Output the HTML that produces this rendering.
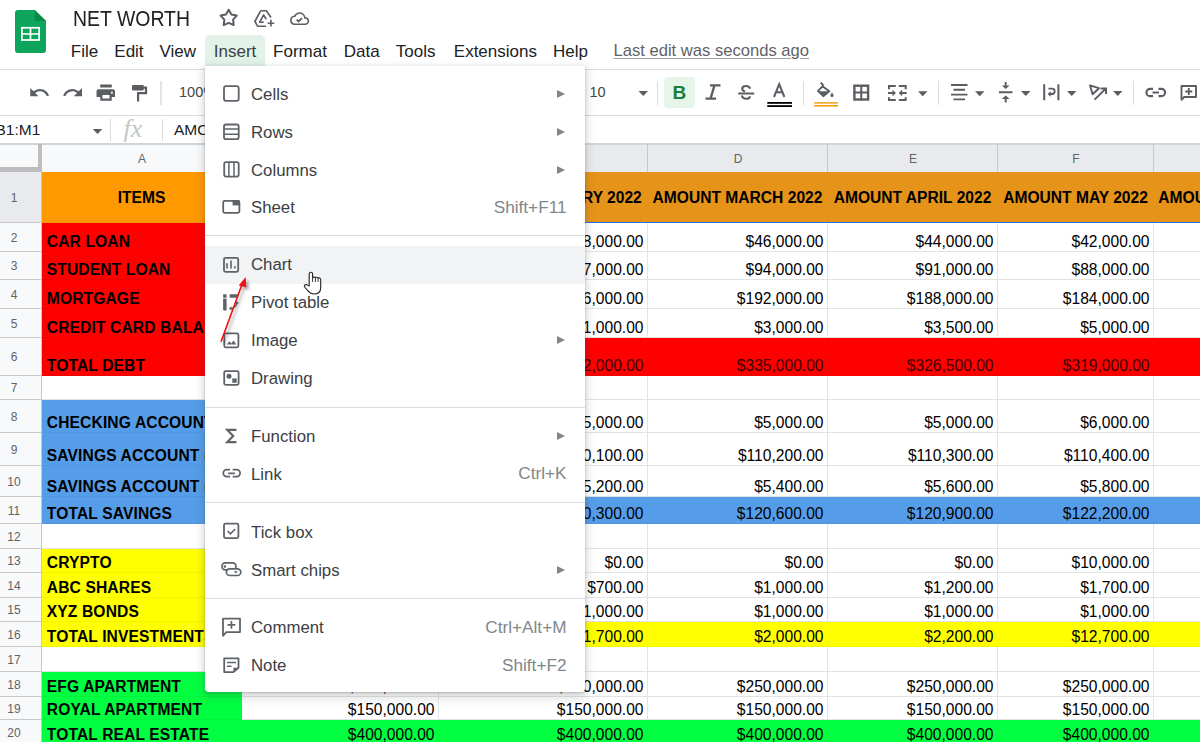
<!DOCTYPE html><html><head><meta charset="utf-8"><style>
*{margin:0;padding:0;box-sizing:border-box}
html,body{width:1200px;height:742px;overflow:hidden;background:#fff;font-family:"Liberation Sans",sans-serif}
.ab{position:absolute}
.t{position:absolute;white-space:nowrap;line-height:1}
.cell{position:absolute;white-space:nowrap;line-height:1;font-size:15.6px;color:#000;overflow:hidden}
.hd{position:absolute;font-size:12px;color:#5f6368;line-height:1;text-align:center}
.mi{position:absolute;left:251px;font-size:16.8px;color:#3c4043;line-height:1;white-space:nowrap}
.sc{position:absolute;right:633.5px;font-size:17.2px;color:#80868b;line-height:1;white-space:nowrap}
.tri{position:absolute;left:557px;width:0;height:0;border-top:4px solid transparent;border-bottom:4px solid transparent;border-left:8px solid #80868b}
.sep{position:absolute;left:205px;width:380px;height:1px;background:#dadce0}
svg.ov{position:absolute;left:0;top:0}
</style></head><body>

<svg class="ab" style="left:15px;top:10px" width="31" height="43" viewBox="0 0 32 44" preserveAspectRatio="none">
<path d="M3 0H20.4L32 11.2V41Q32 44 29 44H3Q0 44 0 41V3Q0 0 3 0Z" fill="#0da55b"/>
<path d="M20.4 0L32 11.2H20.4Z" fill="#0a8c48"/>
<rect x="6.2" y="17.3" width="19.6" height="14.3" fill="#fff"/>
<rect x="8" y="19.1" width="7.1" height="4.6" fill="#0da55b"/><rect x="16.9" y="19.1" width="7.1" height="4.6" fill="#0da55b"/>
<rect x="8" y="25.3" width="7.1" height="4.5" fill="#0da55b"/><rect x="16.9" y="25.3" width="7.1" height="4.5" fill="#0da55b"/>
</svg>
<div class="t" style="left:73px;top:8.12px;font-size:21.6px;color:#202124;transform:scaleX(0.9);transform-origin:0 0">NET WORTH</div>
<div class="ab" style="left:205px;top:35px;width:60px;height:31px;background:#e2f2e8;border-radius:5px 5px 0 0"></div>
<div class="t" style="left:70.8px;top:42.61px;font-size:17px;color:#202124">File</div>
<div class="t" style="left:114.3px;top:42.61px;font-size:17px;color:#202124">Edit</div>
<div class="t" style="left:159.55px;top:42.61px;font-size:17px;color:#202124">View</div>
<div class="t" style="left:213.8px;top:42.61px;font-size:17px;color:#3c4043">Insert</div>
<div class="t" style="left:273.05px;top:42.61px;font-size:17px;color:#202124">Format</div>
<div class="t" style="left:343.8px;top:42.61px;font-size:17px;color:#202124">Data</div>
<div class="t" style="left:395.8px;top:42.61px;font-size:17px;color:#202124">Tools</div>
<div class="t" style="left:453.8px;top:42.61px;font-size:17px;color:#202124">Extensions</div>
<div class="t" style="left:553.05px;top:42.61px;font-size:17px;color:#202124">Help</div>
<div class="t" style="left:613.5px;top:42.95px;font-size:16.6px;color:#5f6368;text-decoration:underline;text-decoration-color:#9aa0a6;text-underline-offset:1.5px">Last edit was seconds ago</div>
<div class="ab" style="left:0px;top:68.6px;width:1200px;height:1.2px;background:#dadce0;"></div>
<div class="ab" style="left:0px;top:115px;width:1200px;height:1px;background:#dadce0;"></div>
<div class="ab" style="left:0px;top:143px;width:1200px;height:2px;background:#d2d4d6;"></div>
<div class="ab" style="left:160.3px;top:81px;width:1.6px;height:24px;background:#e3e5e8;"></div>
<div class="ab" style="left:657px;top:81px;width:1px;height:24px;background:#dadce0;"></div>
<div class="ab" style="left:803px;top:81px;width:1px;height:24px;background:#dadce0;"></div>
<div class="ab" style="left:938px;top:81px;width:1px;height:24px;background:#dadce0;"></div>
<div class="ab" style="left:1133px;top:81px;width:1px;height:24px;background:#dadce0;"></div>
<div class="ab" style="left:664px;top:77px;width:31px;height:31px;background:#e6f4ea;border-radius:4px"></div>
<div class="t" style="left:589.5px;top:84.73px;font-size:14.5px;color:#444746">10</div>
<div class="t" style="left:179px;top:84.73px;font-size:14.5px;color:#444746">100%</div>
<div class="t" style="left:-4.5px;top:121.88px;font-size:15.5px;color:#202124">B1:M1</div>
<div class="t" style="left:174px;top:121.88px;font-size:15.5px;color:#202124">AMOUNT JANUARY 2022</div>
<div class="ab" style="left:110px;top:119px;width:1px;height:22px;background:#dadce0;"></div>
<div class="ab" style="left:162px;top:119px;width:1px;height:22px;background:#dadce0;"></div>
<div class="t" style="left:123.5px;top:116.49px;font-size:26px;font-family:'Liberation Serif',serif;font-style:italic;color:#c4c7c5">fx</div>
<div class="t" style="left:672.5px;top:83.12px;font-size:19px;font-weight:bold;color:#188038">B</div>
<svg class="ov" width="1200" height="742"><g transform="translate(28.4 81.6) scale(0.92)"><path d="M12.5 8c-2.65 0-5.05.99-6.9 2.6L2 7v9h9l-3.62-3.62c1.39-1.160 3.16-1.88 5.12-1.88 3.54 0 6.55 2.31 7.6 5.5l2.37-.78C21.08 11.03 17.15 8 12.5 8z" fill="#5a5e63"/></g><g transform="translate(61.76 81.6) scale(0.92)"><path d="M18.4 10.6C16.55 8.99 14.15 8 11.5 8c-4.65 0-8.58 3.03-9.96 7.22L3.9 16c1.05-3.19 4.05-5.5 7.6-5.5 1.95 0 3.73.72 5.12 1.88L13 16h9V7l-3.6 3.6z" fill="#5a5e63"/></g><rect x="100.25" y="84.5" width="11.5" height="3" fill="#5a5e63"/><path d="M98.5 89.25H113A2 2 0 0 1 115 91.25V97H111.75V100.75H100.25V97H96.5V91.25A2 2 0 0 1 98.5 89.25Z" fill="#5a5e63"/><rect x="102.5" y="95" width="7" height="3.5" fill="#fff"/><rect x="111" y="91.8" width="1.8" height="1.8" fill="#fff"/><rect x="132" y="85" width="11.75" height="5.5" rx="1" fill="#5a5e63"/><path d="M143 87.6H146V93.1H138.1V101.5" fill="none" stroke="#5a5e63" stroke-width="2.2"/><path d="M638.5 91H648.0L643.25 96Z" fill="#5a5e63"/><path d="M710 85.3H720.5M705.5 98.7H716M714.5 85.3L710.5 98.7" fill="none" stroke="#5a5e63" stroke-width="2.3"/><path d="M750.3 88.6Q749 86 746 86 742.2 86 742.2 88.8 742.2 90.6 745 91.5" fill="none" stroke="#5a5e63" stroke-width="2.1"/><path d="M738.2 93.5H754.2" fill="none" stroke="#5a5e63" stroke-width="2"/><path d="M741.8 95.5Q742.6 98.8 746 98.8 749.9 98.8 749.9 96.2" fill="none" stroke="#5a5e63" stroke-width="2.1"/><path d="M774 97L779.2 84.2 784.4 97M776 92.2H782.4" fill="none" stroke="#5a5e63" stroke-width="2"/><rect x="767.3" y="102" width="24.7" height="1.8" fill="#000"/><rect x="767.3" y="105.2" width="24.7" height="1.8" fill="#000"/><path d="M820.8 82.6L823.5 85.6" fill="none" stroke="#5a5e63" stroke-width="2"/><path d="M822.5 86.3L829.3 91.3 823.3 96.2 818 90.9Z" fill="none" stroke="#5a5e63" stroke-width="1.9" stroke-linejoin="round"/><path d="M817.6 91.2H829.6L823.3 96.4Z" fill="#5a5e63"/><path d="M832 92.5Q833.6 94.6 833.6 95.5A1.6 1.6 0 0 1 830.4 95.5Q830.4 94.6 832 92.5Z" fill="#5a5e63"/><rect x="814.2" y="102.2" width="23.8" height="1.4" fill="#f29900"/><rect x="814.2" y="105" width="23.8" height="1.5" fill="#f29900"/><rect x="854.4" y="85.7" width="13.7" height="13.8" fill="none" stroke="#5a5e63" stroke-width="2.4"/><path d="M861.25 85V100.5M853.5 92.6H869" fill="none" stroke="#5a5e63" stroke-width="2"/><path d="M889 89.3V86H895.8M898.8 86H905.7V89.3M889 97.2V100H895.8M898.8 100H905.7V97.2" fill="none" stroke="#5a5e63" stroke-width="2"/><path d="M888 93H893M906.7 93H901.5" fill="none" stroke="#5a5e63" stroke-width="1.8"/><path d="M896 93L892.5 89.8V96.2Z M898.7 93L902.2 89.8V96.2Z" fill="#5a5e63"/><path d="M918 91.2H927.5L922.75 96.2Z" fill="#5a5e63"/><path d="M951 85H967.5M953.5 89.8H965M951 94.6H967.5M953.5 99.4H965" fill="none" stroke="#5a5e63" stroke-width="1.9"/><path d="M975 91.2H984.5L979.75 96.2Z" fill="#5a5e63"/><path d="M999 92.2H1012.5M1005.7 82V86M1005.7 102.5V98.5" fill="none" stroke="#5a5e63" stroke-width="1.9"/><path d="M1001.8 85.5H1009.6L1005.7 89Z M1001.8 99H1009.6L1005.7 95.5Z" fill="#5a5e63"/><path d="M1021 91H1030.5L1025.75 96Z" fill="#5a5e63"/><path d="M1044.2 84.2V100.2M1058.4 84.2V100.2" fill="none" stroke="#5a5e63" stroke-width="2"/><path d="M1048.5 88.6H1052A2.7 2.7 0 0 1 1052 94H1050" fill="none" stroke="#5a5e63" stroke-width="1.8"/><path d="M1047.5 94L1050.7 91.3V96.7Z" fill="#5a5e63"/><path d="M1067 91H1076.5L1071.75 96Z" fill="#5a5e63"/><path d="M1090 85.3L1099 88.2 1092.6 94.3Z" fill="none" stroke="#5a5e63" stroke-width="1.9" stroke-linejoin="round"/><path d="M1094.6 99.6L1105.7 88.6M1100.5 88.5H1106V94" fill="none" stroke="#5a5e63" stroke-width="2"/><path d="M1113 91H1122.5L1117.75 96Z" fill="#5a5e63"/><path d="M1153 88.9H1150A3.6 3.6 0 0 0 1150 96.1H1153M1158.5 88.9H1161.5A3.6 3.6 0 0 1 1161.5 96.1H1158.5M1152.5 92.5H1159" fill="none" stroke="#5a5e63" stroke-width="2.1"/><path d="M1181.5 99.8V86H1196V97H1184.2Z" fill="none" stroke="#5a5e63" stroke-width="1.9" stroke-linejoin="round"/><path d="M1188.8 88V95M1185.3 91.5H1192.3" fill="none" stroke="#5a5e63" stroke-width="1.8"/><polygon points="228.70,9.70 231.40,14.48 236.78,15.57 233.07,19.62 233.70,25.08 228.70,22.80 223.70,25.08 224.33,19.62 220.62,15.57 226.00,14.48" fill="none" stroke="#5a5e63" stroke-width="2" stroke-linejoin="round"/><path d="M260.6 10.8H266.4L271 17.5M266 26.2H257.6L254.9 21.5 260.6 10.8" fill="none" stroke="#5a5e63" stroke-width="1.6" stroke-linejoin="round"/><path d="M263.8 22.2H259.7L263.6 15 266.3 19.3" fill="none" stroke="#5a5e63" stroke-width="1.6" stroke-linejoin="round"/><path d="M270.9 19.8V26.5M267.6 23.2H274.3" fill="none" stroke="#5a5e63" stroke-width="1.6"/><g transform="translate(290 9.0) scale(0.8)"><path d="M19.35 10.04C18.67 6.59 15.64 4 12 4 9.11 4 6.6 5.640 5.35 8.04 2.34 8.36 0 10.91 0 14c0 3.31 2.69 6 6 6h13c2.76 0 5-2.24 5-5 0-2.64-2.05-4.78-4.65-4.96zM19 18H6c-2.21 0-4-1.79-4-4 0-2.05 1.53-3.76 3.56-3.970l1.07-.11.5-.95C8.080 7.14 9.94 6 12 6c2.62 0 4.88 1.86 5.39 4.43l.3 1.5 1.53.11c1.56.1 2.78 1.41 2.78 2.96 0 1.65-1.35 3-3 3z" fill="#5a5e63"/></g><path d="M296.6 19.6L298.6 21.5 301.9 18.2" fill="none" stroke="#5a5e63" stroke-width="1.8"/><path d="M92.8 129H102.3L97.55 134Z" fill="#5a5e63"/></svg>
<div class="ab" style="left:0px;top:145px;width:1200px;height:27px;background:#e8eaed;"></div>
<div class="ab" style="left:0px;top:145px;width:242px;height:27px;background:#f8f9fa;"></div>
<div class="ab" style="left:0px;top:172px;width:42px;height:600px;background:#f8f9fa;"></div>
<div class="ab" style="left:0px;top:172px;width:42px;height:51px;background:#e8eaed;"></div>
<div class="ab" style="left:0px;top:222px;width:42px;height:1px;background:#c7c7c7;"></div>
<div class="ab" style="left:42px;top:222px;width:1200px;height:1px;background:#e2e3e3;"></div>
<div class="ab" style="left:0px;top:251px;width:42px;height:1px;background:#c7c7c7;"></div>
<div class="ab" style="left:42px;top:251px;width:1200px;height:1px;background:#e2e3e3;"></div>
<div class="ab" style="left:0px;top:279px;width:42px;height:1px;background:#c7c7c7;"></div>
<div class="ab" style="left:42px;top:279px;width:1200px;height:1px;background:#e2e3e3;"></div>
<div class="ab" style="left:0px;top:308px;width:42px;height:1px;background:#c7c7c7;"></div>
<div class="ab" style="left:42px;top:308px;width:1200px;height:1px;background:#e2e3e3;"></div>
<div class="ab" style="left:0px;top:337px;width:42px;height:1px;background:#c7c7c7;"></div>
<div class="ab" style="left:42px;top:337px;width:1200px;height:1px;background:#e2e3e3;"></div>
<div class="ab" style="left:0px;top:375px;width:42px;height:1px;background:#c7c7c7;"></div>
<div class="ab" style="left:42px;top:375px;width:1200px;height:1px;background:#e2e3e3;"></div>
<div class="ab" style="left:0px;top:399px;width:42px;height:1px;background:#c7c7c7;"></div>
<div class="ab" style="left:42px;top:399px;width:1200px;height:1px;background:#e2e3e3;"></div>
<div class="ab" style="left:0px;top:432px;width:42px;height:1px;background:#c7c7c7;"></div>
<div class="ab" style="left:42px;top:432px;width:1200px;height:1px;background:#e2e3e3;"></div>
<div class="ab" style="left:0px;top:465px;width:42px;height:1px;background:#c7c7c7;"></div>
<div class="ab" style="left:42px;top:465px;width:1200px;height:1px;background:#e2e3e3;"></div>
<div class="ab" style="left:0px;top:496px;width:42px;height:1px;background:#c7c7c7;"></div>
<div class="ab" style="left:42px;top:496px;width:1200px;height:1px;background:#e2e3e3;"></div>
<div class="ab" style="left:0px;top:523px;width:42px;height:1px;background:#c7c7c7;"></div>
<div class="ab" style="left:42px;top:523px;width:1200px;height:1px;background:#e2e3e3;"></div>
<div class="ab" style="left:0px;top:548px;width:42px;height:1px;background:#c7c7c7;"></div>
<div class="ab" style="left:42px;top:548px;width:1200px;height:1px;background:#e2e3e3;"></div>
<div class="ab" style="left:0px;top:572px;width:42px;height:1px;background:#c7c7c7;"></div>
<div class="ab" style="left:42px;top:572px;width:1200px;height:1px;background:#e2e3e3;"></div>
<div class="ab" style="left:0px;top:597px;width:42px;height:1px;background:#c7c7c7;"></div>
<div class="ab" style="left:42px;top:597px;width:1200px;height:1px;background:#e2e3e3;"></div>
<div class="ab" style="left:0px;top:621px;width:42px;height:1px;background:#c7c7c7;"></div>
<div class="ab" style="left:42px;top:621px;width:1200px;height:1px;background:#e2e3e3;"></div>
<div class="ab" style="left:0px;top:646px;width:42px;height:1px;background:#c7c7c7;"></div>
<div class="ab" style="left:42px;top:646px;width:1200px;height:1px;background:#e2e3e3;"></div>
<div class="ab" style="left:0px;top:671px;width:42px;height:1px;background:#c7c7c7;"></div>
<div class="ab" style="left:42px;top:671px;width:1200px;height:1px;background:#e2e3e3;"></div>
<div class="ab" style="left:0px;top:696px;width:42px;height:1px;background:#c7c7c7;"></div>
<div class="ab" style="left:42px;top:696px;width:1200px;height:1px;background:#e2e3e3;"></div>
<div class="ab" style="left:0px;top:719px;width:42px;height:1px;background:#c7c7c7;"></div>
<div class="ab" style="left:42px;top:719px;width:1200px;height:1px;background:#e2e3e3;"></div>
<div class="ab" style="left:0px;top:744px;width:42px;height:1px;background:#c7c7c7;"></div>
<div class="ab" style="left:42px;top:744px;width:1200px;height:1px;background:#e2e3e3;"></div>
<div class="ab" style="left:241px;top:144px;width:1px;height:28px;background:#c7c7c7;"></div>
<div class="ab" style="left:241px;top:172px;width:1px;height:600px;background:#e2e3e3;"></div>
<div class="ab" style="left:438px;top:144px;width:1px;height:28px;background:#c7c7c7;"></div>
<div class="ab" style="left:438px;top:172px;width:1px;height:600px;background:#e2e3e3;"></div>
<div class="ab" style="left:647px;top:144px;width:1px;height:28px;background:#c7c7c7;"></div>
<div class="ab" style="left:647px;top:172px;width:1px;height:600px;background:#e2e3e3;"></div>
<div class="ab" style="left:827px;top:144px;width:1px;height:28px;background:#c7c7c7;"></div>
<div class="ab" style="left:827px;top:172px;width:1px;height:600px;background:#e2e3e3;"></div>
<div class="ab" style="left:997px;top:144px;width:1px;height:28px;background:#c7c7c7;"></div>
<div class="ab" style="left:997px;top:172px;width:1px;height:600px;background:#e2e3e3;"></div>
<div class="ab" style="left:1153px;top:144px;width:1px;height:28px;background:#c7c7c7;"></div>
<div class="ab" style="left:1153px;top:172px;width:1px;height:600px;background:#e2e3e3;"></div>
<div class="ab" style="left:42px;top:172px;width:1200px;height:51px;background:#e69419;"></div>
<div class="ab" style="left:42px;top:172px;width:200px;height:51px;background:#ff9900;"></div>
<div class="ab" style="left:42px;top:223px;width:200px;height:29px;background:#ff0000;"></div>
<div class="ab" style="left:42px;top:252px;width:200px;height:28px;background:#ff0000;"></div>
<div class="ab" style="left:42px;top:280px;width:200px;height:29px;background:#ff0000;"></div>
<div class="ab" style="left:42px;top:309px;width:200px;height:29px;background:#ff0000;"></div>
<div class="ab" style="left:42px;top:338px;width:1200px;height:38px;background:#ff0000;"></div>
<div class="ab" style="left:42px;top:338px;width:200px;height:38px;background:#ff0000;"></div>
<div class="ab" style="left:42px;top:400px;width:200px;height:33px;background:#569de9;"></div>
<div class="ab" style="left:42px;top:433px;width:200px;height:33px;background:#569de9;"></div>
<div class="ab" style="left:42px;top:466px;width:200px;height:31px;background:#569de9;"></div>
<div class="ab" style="left:42px;top:497px;width:1200px;height:27px;background:#569de9;"></div>
<div class="ab" style="left:42px;top:497px;width:200px;height:27px;background:#569de9;"></div>
<div class="ab" style="left:42px;top:549px;width:200px;height:24px;background:#ffff00;"></div>
<div class="ab" style="left:42px;top:573px;width:200px;height:25px;background:#ffff00;"></div>
<div class="ab" style="left:42px;top:598px;width:200px;height:24px;background:#ffff00;"></div>
<div class="ab" style="left:42px;top:622px;width:1200px;height:25px;background:#ffff00;"></div>
<div class="ab" style="left:42px;top:622px;width:200px;height:25px;background:#ffff00;"></div>
<div class="ab" style="left:42px;top:672px;width:200px;height:25px;background:#00ff40;"></div>
<div class="ab" style="left:42px;top:697px;width:200px;height:23px;background:#00ff40;"></div>
<div class="ab" style="left:42px;top:720px;width:1200px;height:25px;background:#00ff40;"></div>
<div class="ab" style="left:42px;top:720px;width:200px;height:25px;background:#00ff40;"></div>
<div class="ab" style="left:42px;top:222px;width:1200px;height:1px;background:rgba(0,0,0,0.04);"></div>
<div class="ab" style="left:42px;top:251px;width:200px;height:1px;background:rgba(0,0,0,0.04);"></div>
<div class="ab" style="left:42px;top:279px;width:200px;height:1px;background:rgba(0,0,0,0.04);"></div>
<div class="ab" style="left:42px;top:308px;width:200px;height:1px;background:rgba(0,0,0,0.04);"></div>
<div class="ab" style="left:42px;top:337px;width:200px;height:1px;background:rgba(0,0,0,0.04);"></div>
<div class="ab" style="left:42px;top:375px;width:1200px;height:1px;background:rgba(0,0,0,0.04);"></div>
<div class="ab" style="left:42px;top:432px;width:200px;height:1px;background:rgba(0,0,0,0.04);"></div>
<div class="ab" style="left:42px;top:465px;width:200px;height:1px;background:rgba(0,0,0,0.04);"></div>
<div class="ab" style="left:42px;top:496px;width:200px;height:1px;background:rgba(0,0,0,0.04);"></div>
<div class="ab" style="left:42px;top:523px;width:1200px;height:1px;background:rgba(0,0,0,0.04);"></div>
<div class="ab" style="left:42px;top:572px;width:200px;height:1px;background:rgba(0,0,0,0.04);"></div>
<div class="ab" style="left:42px;top:597px;width:200px;height:1px;background:rgba(0,0,0,0.04);"></div>
<div class="ab" style="left:42px;top:621px;width:200px;height:1px;background:rgba(0,0,0,0.04);"></div>
<div class="ab" style="left:42px;top:646px;width:1200px;height:1px;background:rgba(0,0,0,0.04);"></div>
<div class="ab" style="left:42px;top:696px;width:200px;height:1px;background:rgba(0,0,0,0.04);"></div>
<div class="ab" style="left:42px;top:719px;width:200px;height:1px;background:rgba(0,0,0,0.04);"></div>
<div class="ab" style="left:42px;top:744px;width:1200px;height:1px;background:rgba(0,0,0,0.04);"></div>
<div class="ab" style="left:41px;top:144px;width:1px;height:600px;background:#c7c7c7;"></div>
<div class="ab" style="left:38px;top:144px;width:4px;height:28px;background:#bdbdbd;"></div>
<div class="ab" style="left:0px;top:167px;width:42px;height:5px;background:#bdbdbd;"></div>
<div class="ab" style="left:242px;top:222px;width:1000px;height:1.2px;background:#1a73e8;"></div>
<div class="hd" style="left:42px;top:152.5px;width:200px">A</div>
<div class="hd" style="left:242px;top:152.5px;width:197px">B</div>
<div class="hd" style="left:439px;top:152.5px;width:209px">C</div>
<div class="hd" style="left:648px;top:152.5px;width:180px">D</div>
<div class="hd" style="left:828px;top:152.5px;width:170px">E</div>
<div class="hd" style="left:998px;top:152.5px;width:156px">F</div>
<div class="hd" style="left:1154px;top:152.5px;width:163px">G</div>
<div class="hd" style="left:-6px;top:191.5px;width:40px">1</div>
<div class="hd" style="left:-6px;top:231.5px;width:40px">2</div>
<div class="hd" style="left:-6px;top:260.0px;width:40px">3</div>
<div class="hd" style="left:-6px;top:288.5px;width:40px">4</div>
<div class="hd" style="left:-6px;top:317.5px;width:40px">5</div>
<div class="hd" style="left:-6px;top:351.0px;width:40px">6</div>
<div class="hd" style="left:-6px;top:382.0px;width:40px">7</div>
<div class="hd" style="left:-6px;top:410.5px;width:40px">8</div>
<div class="hd" style="left:-6px;top:443.5px;width:40px">9</div>
<div class="hd" style="left:-6px;top:475.5px;width:40px">10</div>
<div class="hd" style="left:-6px;top:504.5px;width:40px">11</div>
<div class="hd" style="left:-6px;top:530.5px;width:40px">12</div>
<div class="hd" style="left:-6px;top:555.0px;width:40px">13</div>
<div class="hd" style="left:-6px;top:579.5px;width:40px">14</div>
<div class="hd" style="left:-6px;top:604.0px;width:40px">15</div>
<div class="hd" style="left:-6px;top:628.5px;width:40px">16</div>
<div class="hd" style="left:-6px;top:653.5px;width:40px">17</div>
<div class="hd" style="left:-6px;top:678.5px;width:40px">18</div>
<div class="hd" style="left:-6px;top:702.5px;width:40px">19</div>
<div class="hd" style="left:-6px;top:726.5px;width:40px">20</div>
<div class="cell" style="left:42px;top:190.29px;width:199px;text-align:center;font-weight:bold">ITEMS</div>
<div class="cell" style="left:242px;top:190.29px;width:196px;text-align:center;font-weight:bold">AMOUNT JANUARY 2022</div>
<div class="cell" style="left:439px;top:190.29px;width:208px;text-align:center;font-weight:bold">AMOUNT FEBRUARY 2022</div>
<div class="cell" style="left:648px;top:190.29px;width:179px;text-align:center;font-weight:bold">AMOUNT MARCH 2022</div>
<div class="cell" style="left:828px;top:190.29px;width:169px;text-align:center;font-weight:bold">AMOUNT APRIL 2022</div>
<div class="cell" style="left:998px;top:190.29px;width:155px;text-align:center;font-weight:bold">AMOUNT MAY 2022</div>
<div class="cell" style="left:1154px;top:190.29px;width:162px;text-align:center;font-weight:bold">AMOUNT JUNE 2022</div>
<div class="cell" style="left:46.8px;top:233.89px;width:194px;font-weight:bold;letter-spacing:0.13px">CAR LOAN</div>
<div class="cell" style="left:242px;top:233.59px;width:192.5px;text-align:right;color:#000">$50,000.00</div>
<div class="cell" style="left:439px;top:233.59px;width:204.5px;text-align:right;color:#000">$48,000.00</div>
<div class="cell" style="left:648px;top:233.59px;width:175.5px;text-align:right;color:#000">$46,000.00</div>
<div class="cell" style="left:828px;top:233.59px;width:165.5px;text-align:right;color:#000">$44,000.00</div>
<div class="cell" style="left:998px;top:233.59px;width:151.5px;text-align:right;color:#000">$42,000.00</div>
<div class="cell" style="left:46.8px;top:261.89px;width:194px;font-weight:bold;letter-spacing:0.13px">STUDENT LOAN</div>
<div class="cell" style="left:242px;top:261.59px;width:192.5px;text-align:right;color:#000">$100,000.00</div>
<div class="cell" style="left:439px;top:261.59px;width:204.5px;text-align:right;color:#000">$97,000.00</div>
<div class="cell" style="left:648px;top:261.59px;width:175.5px;text-align:right;color:#000">$94,000.00</div>
<div class="cell" style="left:828px;top:261.59px;width:165.5px;text-align:right;color:#000">$91,000.00</div>
<div class="cell" style="left:998px;top:261.59px;width:151.5px;text-align:right;color:#000">$88,000.00</div>
<div class="cell" style="left:46.8px;top:290.89px;width:194px;font-weight:bold;letter-spacing:0.13px">MORTGAGE</div>
<div class="cell" style="left:242px;top:290.59px;width:192.5px;text-align:right;color:#000">$200,000.00</div>
<div class="cell" style="left:439px;top:290.59px;width:204.5px;text-align:right;color:#000">$196,000.00</div>
<div class="cell" style="left:648px;top:290.59px;width:175.5px;text-align:right;color:#000">$192,000.00</div>
<div class="cell" style="left:828px;top:290.59px;width:165.5px;text-align:right;color:#000">$188,000.00</div>
<div class="cell" style="left:998px;top:290.59px;width:151.5px;text-align:right;color:#000">$184,000.00</div>
<div class="cell" style="left:46.8px;top:319.89px;width:194px;font-weight:bold;letter-spacing:0.13px">CREDIT CARD BALANCE</div>
<div class="cell" style="left:242px;top:319.59px;width:192.5px;text-align:right;color:#000">$1,000.00</div>
<div class="cell" style="left:439px;top:319.59px;width:204.5px;text-align:right;color:#000">$1,000.00</div>
<div class="cell" style="left:648px;top:319.59px;width:175.5px;text-align:right;color:#000">$3,000.00</div>
<div class="cell" style="left:828px;top:319.59px;width:165.5px;text-align:right;color:#000">$3,500.00</div>
<div class="cell" style="left:998px;top:319.59px;width:151.5px;text-align:right;color:#000">$5,000.00</div>
<div class="cell" style="left:46.8px;top:357.89px;width:194px;font-weight:bold;letter-spacing:0.13px">TOTAL DEBT</div>
<div class="cell" style="left:242px;top:357.59px;width:192.5px;text-align:right;color:#3a0000">$351,000.00</div>
<div class="cell" style="left:439px;top:357.59px;width:204.5px;text-align:right;color:#3a0000">$342,000.00</div>
<div class="cell" style="left:648px;top:357.59px;width:175.5px;text-align:right;color:#3a0000">$335,000.00</div>
<div class="cell" style="left:828px;top:357.59px;width:165.5px;text-align:right;color:#3a0000">$326,500.00</div>
<div class="cell" style="left:998px;top:357.59px;width:151.5px;text-align:right;color:#3a0000">$319,000.00</div>
<div class="cell" style="left:46.8px;top:414.89px;width:194px;font-weight:bold;letter-spacing:0.13px">CHECKING ACCOUNT</div>
<div class="cell" style="left:242px;top:414.59px;width:192.5px;text-align:right;color:#000">$5,000.00</div>
<div class="cell" style="left:439px;top:414.59px;width:204.5px;text-align:right;color:#000">$5,000.00</div>
<div class="cell" style="left:648px;top:414.59px;width:175.5px;text-align:right;color:#000">$5,000.00</div>
<div class="cell" style="left:828px;top:414.59px;width:165.5px;text-align:right;color:#000">$5,000.00</div>
<div class="cell" style="left:998px;top:414.59px;width:151.5px;text-align:right;color:#000">$6,000.00</div>
<div class="cell" style="left:46.8px;top:447.89px;width:194px;font-weight:bold;letter-spacing:0.13px">SAVINGS ACCOUNT (1)</div>
<div class="cell" style="left:242px;top:447.59px;width:192.5px;text-align:right;color:#000">$110,000.00</div>
<div class="cell" style="left:439px;top:447.59px;width:204.5px;text-align:right;color:#000">$110,100.00</div>
<div class="cell" style="left:648px;top:447.59px;width:175.5px;text-align:right;color:#000">$110,200.00</div>
<div class="cell" style="left:828px;top:447.59px;width:165.5px;text-align:right;color:#000">$110,300.00</div>
<div class="cell" style="left:998px;top:447.59px;width:151.5px;text-align:right;color:#000">$110,400.00</div>
<div class="cell" style="left:46.8px;top:478.89px;width:194px;font-weight:bold;letter-spacing:0.13px">SAVINGS ACCOUNT (2)</div>
<div class="cell" style="left:242px;top:478.59px;width:192.5px;text-align:right;color:#000">$5,000.00</div>
<div class="cell" style="left:439px;top:478.59px;width:204.5px;text-align:right;color:#000">$5,200.00</div>
<div class="cell" style="left:648px;top:478.59px;width:175.5px;text-align:right;color:#000">$5,400.00</div>
<div class="cell" style="left:828px;top:478.59px;width:165.5px;text-align:right;color:#000">$5,600.00</div>
<div class="cell" style="left:998px;top:478.59px;width:151.5px;text-align:right;color:#000">$5,800.00</div>
<div class="cell" style="left:46.8px;top:505.89px;width:194px;font-weight:bold;letter-spacing:0.13px">TOTAL SAVINGS</div>
<div class="cell" style="left:242px;top:505.59px;width:192.5px;text-align:right;color:#000">$120,000.00</div>
<div class="cell" style="left:439px;top:505.59px;width:204.5px;text-align:right;color:#000">$120,300.00</div>
<div class="cell" style="left:648px;top:505.59px;width:175.5px;text-align:right;color:#000">$120,600.00</div>
<div class="cell" style="left:828px;top:505.59px;width:165.5px;text-align:right;color:#000">$120,900.00</div>
<div class="cell" style="left:998px;top:505.59px;width:151.5px;text-align:right;color:#000">$122,200.00</div>
<div class="cell" style="left:46.8px;top:554.89px;width:194px;font-weight:bold;letter-spacing:0.13px">CRYPTO</div>
<div class="cell" style="left:242px;top:554.59px;width:192.5px;text-align:right;color:#000">$0.00</div>
<div class="cell" style="left:439px;top:554.59px;width:204.5px;text-align:right;color:#000">$0.00</div>
<div class="cell" style="left:648px;top:554.59px;width:175.5px;text-align:right;color:#000">$0.00</div>
<div class="cell" style="left:828px;top:554.59px;width:165.5px;text-align:right;color:#000">$0.00</div>
<div class="cell" style="left:998px;top:554.59px;width:151.5px;text-align:right;color:#000">$10,000.00</div>
<div class="cell" style="left:46.8px;top:579.89px;width:194px;font-weight:bold;letter-spacing:0.13px">ABC SHARES</div>
<div class="cell" style="left:242px;top:579.59px;width:192.5px;text-align:right;color:#000">$500.00</div>
<div class="cell" style="left:439px;top:579.59px;width:204.5px;text-align:right;color:#000">$700.00</div>
<div class="cell" style="left:648px;top:579.59px;width:175.5px;text-align:right;color:#000">$1,000.00</div>
<div class="cell" style="left:828px;top:579.59px;width:165.5px;text-align:right;color:#000">$1,200.00</div>
<div class="cell" style="left:998px;top:579.59px;width:151.5px;text-align:right;color:#000">$1,700.00</div>
<div class="cell" style="left:46.8px;top:603.89px;width:194px;font-weight:bold;letter-spacing:0.13px">XYZ BONDS</div>
<div class="cell" style="left:242px;top:603.59px;width:192.5px;text-align:right;color:#000">$1,000.00</div>
<div class="cell" style="left:439px;top:603.59px;width:204.5px;text-align:right;color:#000">$1,000.00</div>
<div class="cell" style="left:648px;top:603.59px;width:175.5px;text-align:right;color:#000">$1,000.00</div>
<div class="cell" style="left:828px;top:603.59px;width:165.5px;text-align:right;color:#000">$1,000.00</div>
<div class="cell" style="left:998px;top:603.59px;width:151.5px;text-align:right;color:#000">$1,000.00</div>
<div class="cell" style="left:46.8px;top:628.89px;width:194px;font-weight:bold;letter-spacing:0.13px">TOTAL INVESTMENTS</div>
<div class="cell" style="left:242px;top:628.59px;width:192.5px;text-align:right;color:#000">$1,500.00</div>
<div class="cell" style="left:439px;top:628.59px;width:204.5px;text-align:right;color:#000">$1,700.00</div>
<div class="cell" style="left:648px;top:628.59px;width:175.5px;text-align:right;color:#000">$2,000.00</div>
<div class="cell" style="left:828px;top:628.59px;width:165.5px;text-align:right;color:#000">$2,200.00</div>
<div class="cell" style="left:998px;top:628.59px;width:151.5px;text-align:right;color:#000">$12,700.00</div>
<div class="cell" style="left:46.8px;top:678.89px;width:194px;font-weight:bold;letter-spacing:0.13px">EFG APARTMENT</div>
<div class="cell" style="left:242px;top:678.59px;width:192.5px;text-align:right;color:#000">$250,000.00</div>
<div class="cell" style="left:439px;top:678.59px;width:204.5px;text-align:right;color:#000">$250,000.00</div>
<div class="cell" style="left:648px;top:678.59px;width:175.5px;text-align:right;color:#000">$250,000.00</div>
<div class="cell" style="left:828px;top:678.59px;width:165.5px;text-align:right;color:#000">$250,000.00</div>
<div class="cell" style="left:998px;top:678.59px;width:151.5px;text-align:right;color:#000">$250,000.00</div>
<div class="cell" style="left:46.8px;top:701.89px;width:194px;font-weight:bold;letter-spacing:0.13px">ROYAL APARTMENT</div>
<div class="cell" style="left:242px;top:701.59px;width:192.5px;text-align:right;color:#000">$150,000.00</div>
<div class="cell" style="left:439px;top:701.59px;width:204.5px;text-align:right;color:#000">$150,000.00</div>
<div class="cell" style="left:648px;top:701.59px;width:175.5px;text-align:right;color:#000">$150,000.00</div>
<div class="cell" style="left:828px;top:701.59px;width:165.5px;text-align:right;color:#000">$150,000.00</div>
<div class="cell" style="left:998px;top:701.59px;width:151.5px;text-align:right;color:#000">$150,000.00</div>
<div class="cell" style="left:46.8px;top:726.89px;width:194px;font-weight:bold;letter-spacing:0.13px">TOTAL REAL ESTATE</div>
<div class="cell" style="left:242px;top:726.59px;width:192.5px;text-align:right;color:#000">$400,000.00</div>
<div class="cell" style="left:439px;top:726.59px;width:204.5px;text-align:right;color:#000">$400,000.00</div>
<div class="cell" style="left:648px;top:726.59px;width:175.5px;text-align:right;color:#000">$400,000.00</div>
<div class="cell" style="left:828px;top:726.59px;width:165.5px;text-align:right;color:#000">$400,000.00</div>
<div class="cell" style="left:998px;top:726.59px;width:151.5px;text-align:right;color:#000">$400,000.00</div>
<div class="ab" style="left:205px;top:66px;width:380px;height:626px;background:#fff;border-radius:0 0 4px 4px;box-shadow:0 4px 8px 3px rgba(60,64,67,.15),0 1px 3px rgba(60,64,67,.3)"></div>
<div class="ab" style="left:205px;top:246px;width:380px;height:37.6px;background:#f1f3f4;"></div>
<div class="mi" style="top:86.68px">Cells</div>
<div class="tri" style="top:89.7px"></div>
<div class="mi" style="top:124.68px">Rows</div>
<div class="tri" style="top:127.69999999999999px"></div>
<div class="mi" style="top:162.68px">Columns</div>
<div class="tri" style="top:165.7px"></div>
<div class="mi" style="top:199.98px">Sheet</div>
<div class="sc" style="top:198.74px">Shift+F11</div>
<div class="mi" style="top:257.48px">Chart</div>
<div class="mi" style="top:295.28px">Pivot table</div>
<div class="mi" style="top:332.98px">Image</div>
<div class="tri" style="top:336.0px"></div>
<div class="mi" style="top:370.58px">Drawing</div>
<div class="mi" style="top:428.68px">Function</div>
<div class="tri" style="top:431.7px"></div>
<div class="mi" style="top:466.68px">Link</div>
<div class="sc" style="top:465.44px">Ctrl+K</div>
<div class="mi" style="top:524.98px">Tick box</div>
<div class="mi" style="top:562.68px">Smart chips</div>
<div class="tri" style="top:565.7px"></div>
<div class="mi" style="top:620.48px">Comment</div>
<div class="sc" style="top:619.24px">Ctrl+Alt+M</div>
<div class="mi" style="top:657.98px">Note</div>
<div class="sc" style="top:656.74px">Shift+F2</div>
<div class="sep" style="top:235px"></div>
<div class="sep" style="top:407px"></div>
<div class="sep" style="top:502px"></div>
<div class="sep" style="top:598px"></div>
<svg class="ov" width="1200" height="742"><rect x="224" y="86.1" width="14.7" height="14.7" rx="2" fill="none" stroke="#5f6368" stroke-width="1.8"/><rect x="224" y="124.5" width="14.7" height="14.7" rx="2" fill="none" stroke="#5f6368" stroke-width="1.8"/><path d="M224 129.1H238.7M224 134.3H238.7" fill="none" stroke="#5f6368" stroke-width="1.5"/><rect x="224.2" y="162.1" width="14.5" height="14.5" rx="2" fill="none" stroke="#5f6368" stroke-width="1.8"/><path d="M228.9 162V176.6M234 162V176.6" fill="none" stroke="#5f6368" stroke-width="1.5"/><rect x="223.2" y="200.9" width="16.2" height="11.9" rx="1.5" fill="none" stroke="#5f6368" stroke-width="1.8"/><rect x="232.6" y="200.4" width="7.2" height="5" fill="#5f6368"/><rect x="224" y="257.8" width="14.2" height="14" rx="1.5" fill="none" stroke="#5f6368" stroke-width="1.8"/><path d="M227 263.3V268.6M231 260.5V268.6M234.9 266.2V268.6" fill="none" stroke="#5f6368" stroke-width="1.6"/><rect x="223.1" y="294.3" width="3.5" height="3.4" rx="0.6" fill="#5f6368"/><rect x="229.6" y="294.3" width="8.6" height="3.4" rx="0.6" fill="#5f6368"/><rect x="223.1" y="298.5" width="3.5" height="11.9" rx="0.6" fill="#5f6368"/><path d="M230.5 308.5Q236.5 308 237 302.5" fill="none" stroke="#5f6368" stroke-width="1.4"/><path d="M229 308.5L231.5 306.3V310.7Z M237 301L235 303.5H239Z" fill="#5f6368"/><rect x="224.3" y="333.4" width="14.1" height="13.9" rx="1.5" fill="none" stroke="#5f6368" stroke-width="1.8"/><path d="M226.8 344.6L229.3 341.2 231.3 343.5 233.6 340.6 236.2 344.6Z" fill="#5f6368"/><rect x="224.2" y="371.1" width="14.4" height="13.7" rx="1.5" fill="none" stroke="#5f6368" stroke-width="1.8"/><circle cx="229" cy="376.3" r="2.5" fill="#5f6368"/><rect x="232.3" y="378.4" width="4.4" height="4.4" fill="#5f6368"/><path d="M236.4 429.9H227.3L233.2 436 227.3 442.1H236.4" fill="none" stroke="#5f6368" stroke-width="2.2" stroke-linejoin="miter"/><path d="M230 469.6H226.8A3.5 3.5 0 0 0 226.8 476.6H230M232.7 469.6H236.6A3.5 3.5 0 0 1 236.6 476.6H232.7M228.3 473.3H234.9" fill="none" stroke="#5f6368" stroke-width="1.8"/><rect x="224" y="523.7" width="14.4" height="14.4" rx="1.5" fill="none" stroke="#5f6368" stroke-width="1.8"/><path d="M227.6 531L230.4 533.8 235.2 529" fill="none" stroke="#5f6368" stroke-width="1.6"/><rect x="221.9" y="562.9" width="14.1" height="6.9" rx="3.45" fill="none" stroke="#5f6368" stroke-width="1.7"/><rect x="226.4" y="568.8" width="14.4" height="6.7" rx="3.35" fill="#fff" fill="none" stroke="#5f6368" stroke-width="1.7"/><circle cx="224.9" cy="566.5" r="1.3" fill="#5f6368"/><path d="M233.8 571.2H237.8L235.8 573.4Z" fill="#5f6368"/><path d="M223 635.8V618.6H240V632.1H226.3Z" fill="none" stroke="#5f6368" stroke-width="1.8" stroke-linejoin="round"/><path d="M231.4 620.9V628.7M227.5 624.8H235.3" fill="none" stroke="#5f6368" stroke-width="1.7"/><path d="M224.2 658.3H238.5V667.8L233.4 672.1H224.2Z" fill="none" stroke="#5f6368" stroke-width="1.8" stroke-linejoin="round"/><path d="M233.4 672.1V667.8H238.5Z" fill="#5f6368"/><path d="M227 662.5H236M227 666.3H231.5" fill="none" stroke="#5f6368" stroke-width="1.6"/><defs><filter id="sh" x="-50%" y="-50%" width="200%" height="200%"><feGaussianBlur stdDeviation="1.5"/></filter></defs><g opacity="0.35" filter="url(#sh)" transform="translate(2.5 2.5)"><path d="M221 341.7L242.5 283" stroke="#000" stroke-width="1.6"/><path d="M245.7 277L238.7 285.6 246.3 287.3Z" fill="#000"/></g><path d="M221 341.7L242.5 283" stroke="#f01010" stroke-width="1.6"/><path d="M245.7 277L238.7 285.6 246.3 287.3Z" fill="#f01010"/><path d="M309.2 286V273.9A1.7 1.7 0 0 1 312.6 273.9V277.8Q313.9 276.6 315.4 277.6Q316.8 276.8 318.1 277.9Q320.7 277.5 320.7 280V287.5Q320.7 294 314.2 294Q310.5 294 308.2 291.2L304.6 287Q303.8 285.3 305.6 284.6Q307 284.3 309.2 286Z" fill="#fff" stroke="#2a2a2a" stroke-width="1.15" stroke-linejoin="round"/><path d="M312.6 277.8V282M315.4 277.6V282M318.1 277.9V282" stroke="#2a2a2a" stroke-width="0.9"/></svg>
</body></html>
